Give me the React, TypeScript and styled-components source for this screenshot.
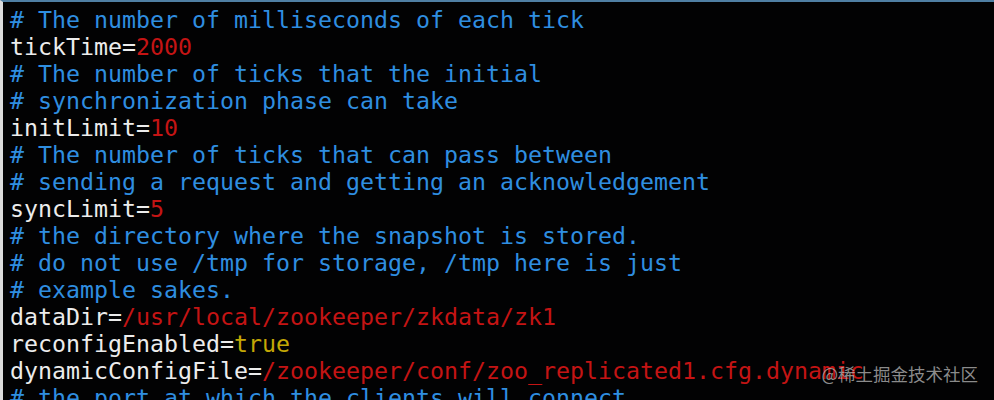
import React from 'react';
import styled, { createGlobalStyle } from 'styled-components';

const GlobalStyle = createGlobalStyle`
    html, body {
        margin: 0;
        padding: 0;
        background: #000;
        overflow: hidden;
    }
`;

type Tone = 'comment' | 'key' | 'value' | 'bool';

const TONES: Record<Tone, string> = {
    comment: '#2f8ee0',
    key: '#ececec',
    value: '#c41414',
    bool: '#c4a806',
};

const Screen = styled.div`
    position: relative;
    width: 994px;
    height: 400px;
    box-sizing: border-box;
    background: #020203;
    border-top: 2px solid #4f7fa3;
    border-left: 3px solid #dcdcdc;
    padding: 4px 0 0 7px;
    overflow: hidden;
`;

const Code = styled.pre`
    margin: 0;
    font-family: "DejaVu Sans Mono", "Liberation Mono", monospace;
    font-size: 23.25px;
    line-height: 27px;
    white-space: pre;
`;

const Line = styled.div`
    height: 27px;
`;

const Part = styled.span<{ tone: Tone }>`
    color: ${({ tone }) => TONES[tone]};
`;

// site watermark laid over the last lines of the screenshot
const Watermark = styled.span`
    position: absolute;
    right: 16px;
    bottom: 14px;
    font-family: "Noto Sans CJK SC", "Noto Sans", sans-serif;
    font-size: 17.5px;
    line-height: 24px;
    color: rgba(185, 185, 185, 0.75);
`;

const lines: [Tone, string][][] = [
    [['comment', '# The number of milliseconds of each tick']],
    [['key', 'tickTime='], ['value', '2000']],
    [['comment', '# The number of ticks that the initial']],
    [['comment', '# synchronization phase can take']],
    [['key', 'initLimit='], ['value', '10']],
    [['comment', '# The number of ticks that can pass between']],
    [['comment', '# sending a request and getting an acknowledgement']],
    [['key', 'syncLimit='], ['value', '5']],
    [['comment', '# the directory where the snapshot is stored.']],
    [['comment', '# do not use /tmp for storage, /tmp here is just']],
    [['comment', '# example sakes.']],
    [['key', 'dataDir='], ['value', '/usr/local/zookeeper/zkdata/zk1']],
    [['key', 'reconfigEnabled='], ['bool', 'true']],
    [['key', 'dynamicConfigFile='], ['value', '/zookeeper/conf/zoo_replicated1.cfg.dynamic']],
    [['comment', '# the port at which the clients will connect']],
];

const App = () => {
    return (
        <>
            <GlobalStyle />
            <Screen>
                <Code>
                    {lines.map((parts, i) => (
                        <Line key={i}>
                            {parts.map(([tone, text], j) => (
                                <Part key={j} tone={tone}>{text}</Part>
                            ))}
                        </Line>
                    ))}
                </Code>
                <Watermark>@稀土掘金技术社区</Watermark>
            </Screen>
        </>
    );
};

export default App;
